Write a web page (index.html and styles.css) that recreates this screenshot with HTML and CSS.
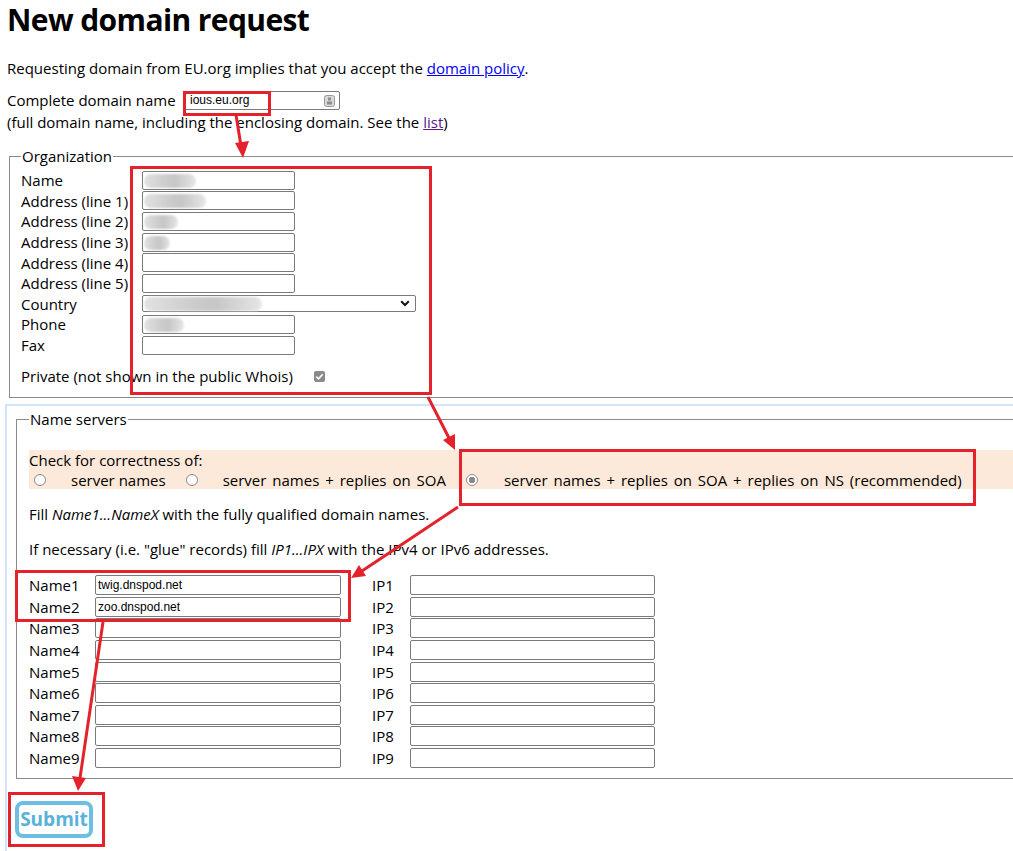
FILE: index.html
```html
<!DOCTYPE html>
<html lang="en">
<head>
<meta charset="utf-8">
<title>New domain request</title>
<link rel="stylesheet" href="styles.css">
</head>
<body>
<div class="page">
  <h1 class="title">New domain request</h1>
  <p class="intro">Requesting domain from EU.org implies that you accept the <a class="link" href="#">domain policy</a>.</p>
  <div class="domain-row">
    <span class="domain-label">Complete domain name</span>
    <span class="field domain-field">ious.eu.org
      <svg class="pw-icon" width="11" height="12" viewBox="0 0 11 12"><rect x="0.5" y="0.5" width="10" height="11" rx="2" fill="#d8d8d8" stroke="#9a9a9a"/><rect x="4" y="2.5" width="3" height="3" fill="#8c8c8c"/><rect x="3" y="6.5" width="5" height="3" fill="#8c8c8c"/></svg>
    </span>
  </div>
  <div class="hint">(full domain name, including the enclosing domain. See the <a class="link visited" href="#">list</a>)</div>

  <fieldset class="org">
    <legend class="legend">Organization</legend>
    <div class="org-grid">
      <span class="lbl">Name</span><span class="field org-field"><span class="blur b-name"></span></span>
      <span class="lbl">Address (line 1)</span><span class="field org-field"><span class="blur b-a1"></span></span>
      <span class="lbl">Address (line 2)</span><span class="field org-field"><span class="blur b-a2"></span></span>
      <span class="lbl">Address (line 3)</span><span class="field org-field"><span class="blur b-a3"></span></span>
      <span class="lbl">Address (line 4)</span><span class="field org-field"></span>
      <span class="lbl">Address (line 5)</span><span class="field org-field"></span>
      <span class="lbl">Country</span><span class="field select-field"><span class="blur b-country"></span><svg class="chev" width="10" height="7" viewBox="0 0 10 7"><path d="M1.2 1.3 L5 5 L8.8 1.3" fill="none" stroke="#111" stroke-width="2"/></svg></span>
      <span class="lbl">Phone</span><span class="field org-field phone"><span class="blur b-phone"></span></span>
      <span class="lbl">Fax</span><span class="field org-field"></span>
    </div>
    <div class="private-row">
      <span class="private-label">Private (not shown in the public Whois)</span>
      <span class="checkbox"><svg width="11" height="11" viewBox="0 0 11 11"><rect width="11" height="11" rx="2" fill="#8a8a8a"/><path d="M2.3 5.6 L4.5 7.8 L8.7 3.2" fill="none" stroke="#fff" stroke-width="1.6"/></svg></span>
    </div>
  </fieldset>

  <div class="ns-wrap">
    <fieldset class="ns">
      <legend class="legend">Name servers</legend>
      <div class="check">
        <div class="check-title">Check for correctness of:</div>
        <div class="check-options">
          <span class="radio"></span><span class="opt opt1">server names</span>
          <span class="radio"></span><span class="opt opt2">server names + replies on SOA</span>
          <span class="radio checked"></span><span class="opt opt3">server names + replies on SOA + replies on NS (recommended)</span>
        </div>
      </div>
      <p class="note note-fill">Fill <em>Name1...NameX</em> with the fully qualified domain names.</p>
      <p class="note note-glue">If necessary (i.e. "glue" records) fill <em>IP1...IPX</em> with the IPv4 or IPv6 addresses.</p>
      <div class="ns-grid">
        <span class="lbl">Name1</span><span class="field ns-field">twig.dnspod.net</span><span class="lbl">IP1</span><span class="field ns-field"></span>
        <span class="lbl">Name2</span><span class="field ns-field">zoo.dnspod.net</span><span class="lbl">IP2</span><span class="field ns-field"></span>
        <span class="lbl">Name3</span><span class="field ns-field"></span><span class="lbl">IP3</span><span class="field ns-field"></span>
        <span class="lbl">Name4</span><span class="field ns-field"></span><span class="lbl">IP4</span><span class="field ns-field"></span>
        <span class="lbl">Name5</span><span class="field ns-field"></span><span class="lbl">IP5</span><span class="field ns-field"></span>
        <span class="lbl">Name6</span><span class="field ns-field"></span><span class="lbl">IP6</span><span class="field ns-field"></span>
        <span class="lbl">Name7</span><span class="field ns-field"></span><span class="lbl">IP7</span><span class="field ns-field"></span>
        <span class="lbl">Name8</span><span class="field ns-field"></span><span class="lbl">IP8</span><span class="field ns-field"></span>
        <span class="lbl">Name9</span><span class="field ns-field"></span><span class="lbl">IP9</span><span class="field ns-field"></span>
      </div>
    </fieldset>
    <button class="submit" type="button">Submit</button>
  </div>
</div>

<svg class="annot" width="1013" height="851" viewBox="0 0 1013 851">
  <g fill="none" stroke="#e3222c" stroke-width="3">
    <rect x="184.5" y="92.5" width="85" height="22"/>
    <rect x="131.5" y="167.5" width="299" height="226"/>
    <rect x="460.5" y="450.5" width="514" height="54"/>
    <rect x="16.5" y="571.5" width="333" height="49"/>
    <rect x="9.5" y="793.5" width="94" height="52"/>
    <line x1="236" y1="115" x2="241" y2="146"/>
    <line x1="428" y1="397" x2="449" y2="438"/>
    <line x1="458" y1="507" x2="362" y2="571"/>
    <line x1="103" y1="622" x2="80" y2="778"/>
  </g>
  <g fill="#e3222c">
    <polygon points="243,158 235,143 249,141"/>
    <polygon points="455,450 443,440 455,434"/>
    <polygon points="351,578 359,565 366,576"/>
    <polygon points="78,791 72,776 86,778"/>
  </g>
</svg>
</body>
</html>
```
FILE: styles.css
```css
html, body {
  margin: 0;
  padding: 0;
  background: #fff;
  overflow: hidden;
}

body {
  position: relative;
  width: 1013px;
  height: 851px;
  font-family: "Open Sans", "Noto Sans", sans-serif;
  font-size: 15px;
  color: #000;
}

.page {
  width: 1200px;
  padding-left: 7px;
}

.title {
  margin: 0;
  font-size: 30px;
  line-height: 40px;
  font-weight: 700;
  letter-spacing: -0.6px;
}

.intro {
  margin: 18px 0 0 0;
  line-height: 20px;
}

.link {
  color: #0000ee;
  text-decoration: underline;
}

.link.visited {
  color: #551a8b;
}

.domain-row {
  margin-top: 12px;
  display: flex;
  align-items: center;
  height: 20px;
}

.domain-label {
  width: 176px;
}

.field {
  display: inline-flex;
  align-items: center;
  box-sizing: border-box;
  border: 1px solid #7a7a7a;
  border-radius: 2px;
  background: #fff;
  font-family: "Liberation Sans", Arial, sans-serif;
  font-size: 12px;
  padding-left: 3px;
  position: relative;
}

.domain-field {
  width: 157px;
  height: 19px;
  padding-left: 6px;
}

.pw-icon {
  position: absolute;
  right: 4px;
  top: 3px;
}

.hint {
  line-height: 20px;
  margin-top: 2px;
}

.org {
  margin: 15px 0 0 2px;
  padding: 0 0 11px 11px;
  border: 1px solid #8a8a8a;
  min-width: 0;
}

.legend {
  padding: 0 1px;
  line-height: 18px;
}

.org-grid {
  display: grid;
  grid-template-columns: 121px 153px;
  grid-auto-rows: 20.6px;
  align-items: center;
  margin-top: 5px;
}

.org-grid .lbl {
  line-height: 18px;
}

.org-field {
  width: 153px;
  height: 19px;
}

.select-field {
  width: 274px;
  height: 17px;
  justify-content: flex-end;
  padding-right: 5px;
}

.chev {
  display: block;
}

.blur {
  position: absolute;
  left: 1px;
  top: 2px;
  height: 14px;
  border-radius: 7px;
  background: linear-gradient(90deg, #e2e2e2 0%, #cdcdcd 40%, #c6c6c6 60%, #e6e6e6 100%);
  filter: blur(1px);
}

.b-name { width: 52px; }
.b-a1 { width: 62px; }
.b-a2 { width: 34px; }
.b-a3 { width: 26px; }
.b-country { width: 118px; top: 1px; }
.b-phone { width: 40px; }

.private-row {
  display: flex;
  align-items: center;
  margin-top: 11px;
  height: 20px;
}

.private-label {
  width: 293px;
}

.checkbox {
  display: block;
  height: 11px;
}

.checkbox svg {
  display: block;
}

.ns-wrap {
  margin: 6px 0 0 -2px;
  border-top: 2px solid #d3e5f8;
  border-left: 2px solid #d3e5f8;
  padding: 4px 0 14px 9px;
  height: 460px;
}

.ns {
  margin: 0;
  padding: 0 0 9px 12px;
  border: 1px solid #8a8a8a;
  min-width: 0;
}

.check {
  margin-top: 22px;
  background: #fde9d9;
  padding: 1px 0 0 0;
  height: 38px;
}

.check-title {
  line-height: 19px;
}

.check-options {
  display: flex;
  align-items: center;
  height: 19px;
}

.radio {
  display: block;
  box-sizing: border-box;
  width: 12px;
  height: 12px;
  border: 1px solid #8a8a8a;
  border-radius: 50%;
  background: #fff;
  margin-left: 5px;
  margin-right: 25px;
}

.radio.checked {
  background: radial-gradient(circle, #8a8a8a 0 3px, #fff 3.5px);
  margin-left: 20px;
  margin-right: 26px;
}

.opt1 { margin-right: 15px; }
.opt2, .opt3 { word-spacing: 2px; }

.note {
  margin: 0;
  line-height: 20px;
}

.note-fill { margin-top: 15px; }
.note-glue { margin-top: 15px; }

.ns-grid {
  display: grid;
  grid-template-columns: 66px 246px 31px 38px 245px;
  grid-auto-rows: 21.6px;
  align-items: center;
  margin-top: 15px;
}

.ns-grid .lbl:nth-child(4n+3) {
  grid-column: 4;
}

.ns-grid .field:nth-child(4n) {
  grid-column: 5;
}

.ns-field {
  height: 20px;
  width: 100%;
  font-size: 12px;
  padding-left: 2px;
}

.submit {
  display: block;
  margin-top: 22px;
  margin-left: -1px;
  width: 78px;
  height: 37px;
  box-sizing: border-box;
  border: 4px solid #6cbfe2;
  border-radius: 8px;
  background: #fff;
  color: #58b2d9;
  font-family: "Open Sans", "Noto Sans", sans-serif;
  font-weight: 700;
  font-size: 19px;
  padding: 0;
  line-height: 27px;
}

.annot {
  position: absolute;
  left: 0;
  top: 0;
  pointer-events: none;
}
```
